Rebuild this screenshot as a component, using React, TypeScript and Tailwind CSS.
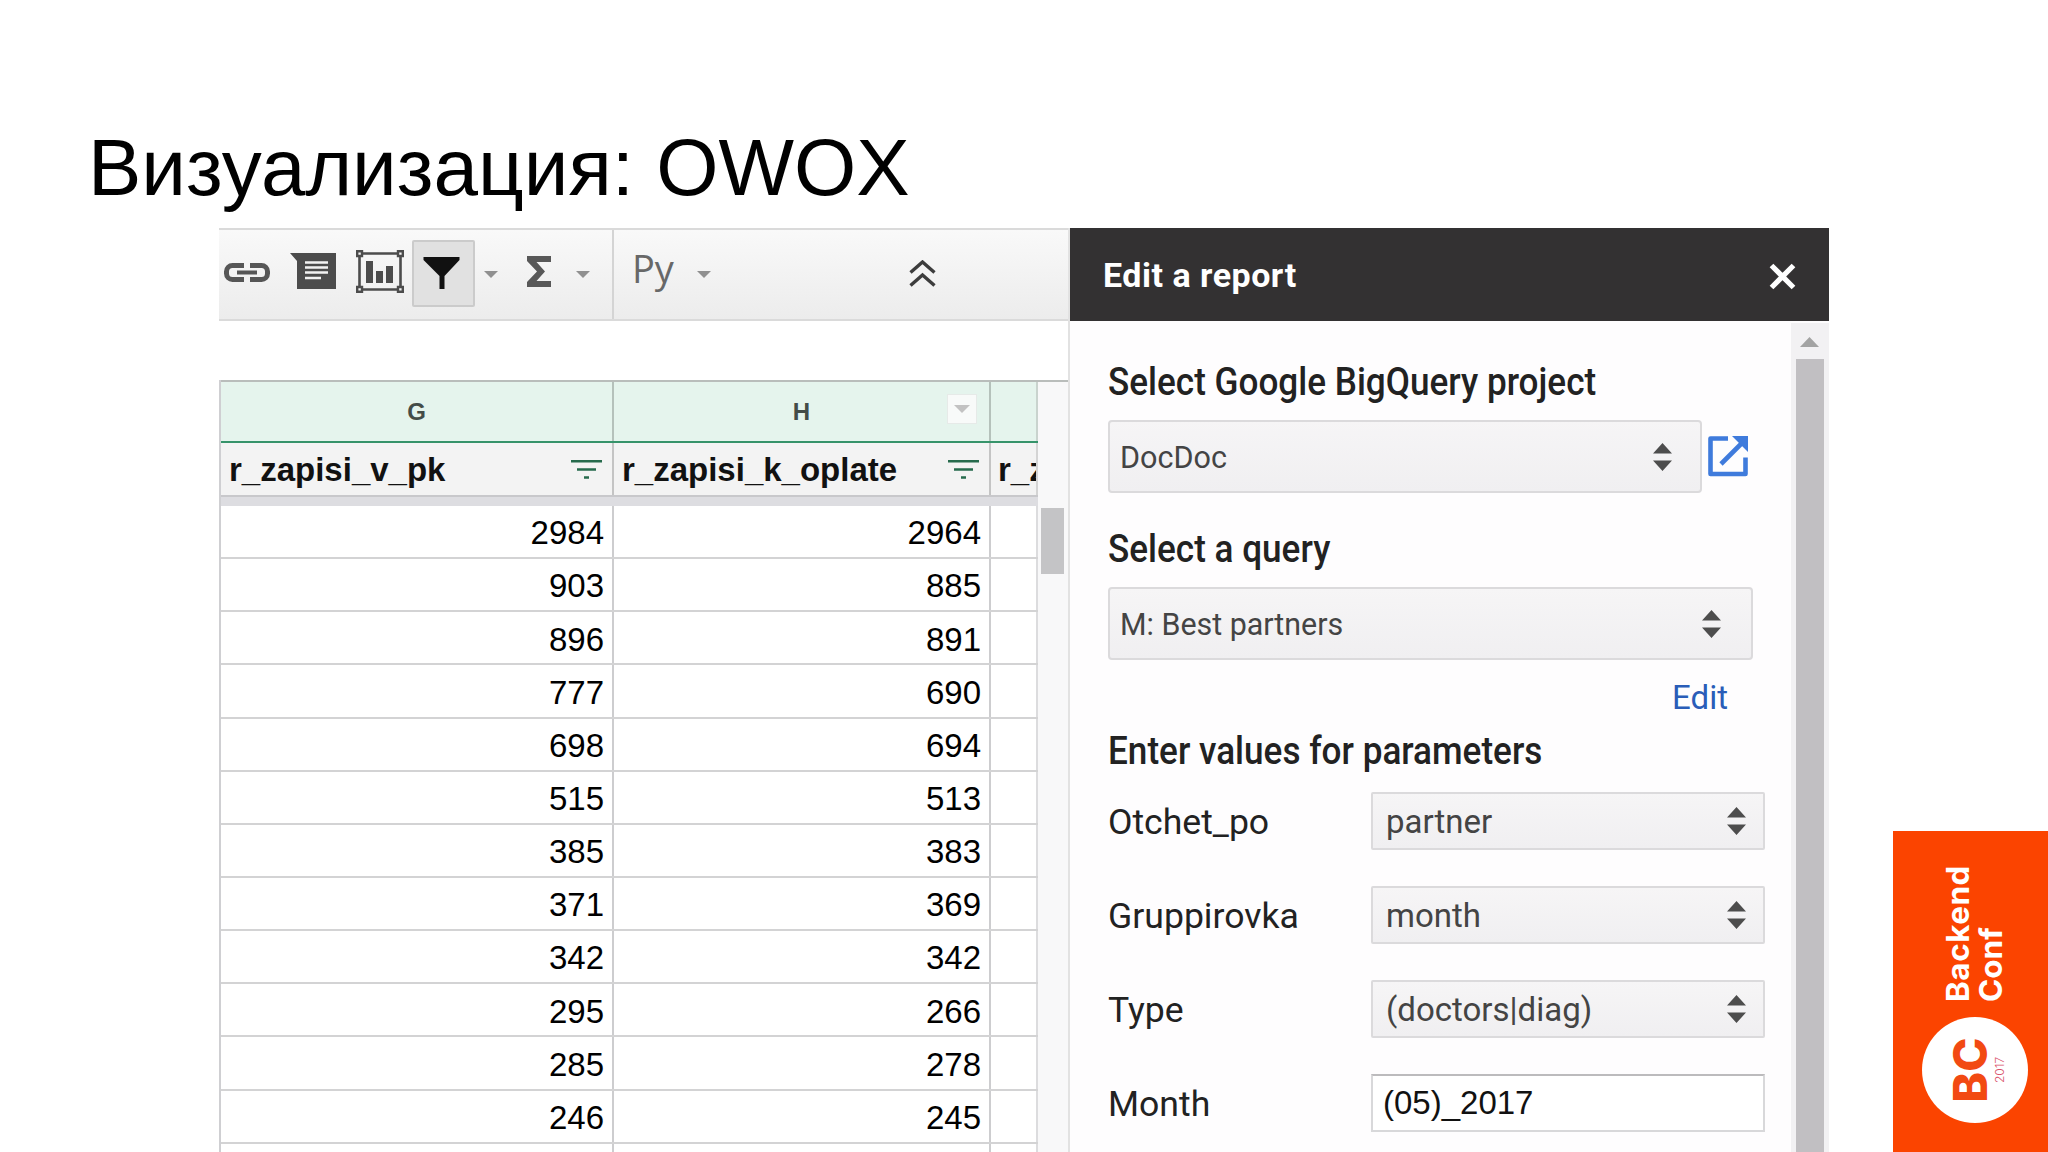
import React from "react";

const ROWS: [string, string][] = [
  ["2984", "2964"],
  ["903", "885"],
  ["896", "891"],
  ["777", "690"],
  ["698", "694"],
  ["515", "513"],
  ["385", "383"],
  ["371", "369"],
  ["342", "342"],
  ["295", "266"],
  ["285", "278"],
  ["246", "245"],
  ["", ""],
];

const PARAMS = [
  { label: "Otchet_po", value: "partner" },
  { label: "Gruppirovka", value: "month" },
  { label: "Type", value: "(doctors|diag)" },
];

function Caret({ className = "" }: { className?: string }) {
  return (
    <svg className={`h-[7px] w-[14px] shrink-0 ${className}`} viewBox="0 0 14 7">
      <path d="M0 0h14L7 7z" fill="#909090" />
    </svg>
  );
}

function Toolbar() {
  return (
    <div className="flex h-[93px] shrink-0 items-start border-y-2 border-[#dadada] bg-linear-to-b from-[#f9f9f9] to-[#ececec]">
      <div className="flex h-full w-[395px] shrink-0 items-start border-r-2 border-[#d4d4d4]">
        <svg className="mt-[33px] ml-[5px] h-[19px] w-[46px] shrink-0" viewBox="0 0 46 19" fill="none" stroke="#565656">
          <path d="M20 2.5H8.500A6 6 0 0 0 2.500 8.500v2A6 6 0 0 0 8.500 16.500H20M26 2.500h11.500a6 6 0 0 1 6 6v2a6 6 0 0 1-6 6H26" strokeWidth="5" />
          <path d="M13 9.500h20" strokeWidth="4" />
        </svg>
        <svg className="mt-[23px] ml-[20px] h-[36px] w-[46px] shrink-0" viewBox="0 0 46 36">
          <path d="M0 0h46v36H7V8z" fill="#4c4c4c" />
          <path d="M15 9.500h23M15 14.500h23M15 19.500h23M15 25h16" stroke="#f2f2f2" strokeWidth="2.600" />
        </svg>
        <svg className="mt-[20px] ml-[20px] h-[43px] w-[48px] shrink-0" viewBox="0 0 48 43">
          <path d="M3.500 3.500h41v36h-41z" fill="none" stroke="#4c4c4c" strokeWidth="2.600" />
          <path d="M10 11h7v22h-7zM20 21h7v12h-7zM30 16h7v17h-7z" fill="#4c4c4c" />
          <g fill="#f4f4f4" stroke="#4c4c4c" strokeWidth="2.400">
            <path d="M1.200 1.200h4.800v4.800h-4.800zM42 1.200h4.800v4.800H42zM1.200 37h4.800v4.800h-4.800zM42 37h4.800v4.800H42z" />
          </g>
        </svg>
        <div className="mt-[10px] ml-[8px] flex h-[67px] w-[63px] shrink-0 rounded-xs border-2 border-[#cbcbcb] bg-[#e1e1e1] pt-[15px] pl-[9px]">
          <svg className="h-[32px] w-[37px]" viewBox="0 0 36 32">
            <path d="M0 0h36v3L21 19v13h-5V19L0 3z" fill="#111" />
          </svg>
        </div>
        <Caret className="mt-[41px] ml-[9px]" />
        <svg className="mt-[26px] ml-[29px] h-[31px] w-[24px] shrink-0" viewBox="0 0 24 31">
          <path d="M0 0h24v6H9.500l8.500 9.500L9.500 25H24v6H0v-5l10-10.500L0 5z" fill="#585858" />
        </svg>
        <Caret className="mt-[41px] ml-[25px]" />
      </div>
      <div className="mt-[12px] ml-[18px] h-[52px] w-[46px] shrink-0 font-['Open_Sans'] text-[38px] leading-[52px] font-medium text-[#686868]">Py</div>
      <Caret className="mt-[41px] ml-[19px]" />
      <svg className="mt-[30px] ml-[198px] h-[27px] w-[27px] shrink-0" viewBox="0 0 27 27" fill="none" stroke="#3c3c3c" strokeWidth="3.400">
        <path d="M1.500 12.500l12-10.500 12 10.500M1.500 25.500l12-10.500 12 10.500" />
      </svg>
    </div>
  );
}

function FilterIcon() {
  return (
    <svg className="h-[19px] w-[31px] shrink-0" viewBox="0 0 31 19">
      <path d="M0 1.200h31M6 9.500h19M13 17.500h5" stroke="#276b4d" strokeWidth="2.400" />
    </svg>
  );
}

function Sheet() {
  return (
    <div className="flex h-full w-[851px] shrink-0 flex-col border-r-2 border-[#e2e2e2] font-['Liberation_Sans',sans-serif]">
      <Toolbar />
      <div className="flex min-h-0 flex-1 pt-[59px]">
        <div className="w-[819px] shrink-0 border-l-2 border-[#cfcfd2]">
          <div className="flex h-[61px] border-t-2 border-[#b9bdbb] bg-[#e5f4ed] text-[24px] font-bold text-[#444c48]">
            <div className="flex w-[393px] items-center justify-center border-r-2 border-[#b5c1bb]">G</div>
            <div className="relative flex w-[377px] items-center justify-center border-r-2 border-[#b5c1bb]">
              H
              <div className="absolute top-[12px] right-[12px] flex h-[30px] w-[30px] items-center justify-center border border-[#e6eae8] bg-[#f8faf9]">
                <svg className="h-[8px] w-[16px]" viewBox="0 0 16 8">
                  <path d="M0 0h16L8 8z" fill="#c2c2c2" />
                </svg>
              </div>
            </div>
            <div className="flex-1 border-r-2 border-[#c9d3ce]" />
          </div>
          <div className="flex h-[54px] border-t-2 border-[#36936a] bg-[#f3f3f3] text-[33px] font-bold text-[#111]">
            <div className="flex w-[393px] items-center justify-between border-r-2 border-[#c4c4c4] pr-[10px] pl-[8px]">
              <span className="pt-[2px]">r_zapisi_v_pk</span>
              <FilterIcon />
            </div>
            <div className="flex w-[377px] items-center justify-between border-r-2 border-[#c4c4c4] pr-[10px] pl-[8px]">
              <span className="pt-[2px]">r_zapisi_k_oplate</span>
              <FilterIcon />
            </div>
            <div className="flex flex-1 items-center overflow-hidden border-r-2 border-[#d4d4d4] pt-[2px] pl-[7px] whitespace-nowrap">r_z</div>
          </div>
          <div className="h-[11px] w-[847px] border-t-2 border-[#c8c8cb] bg-[#dddde1]" />
          <div className="h-[646px] overflow-hidden">
            {ROWS.map(([g, h], i) => (
              <div key={i} className="flex h-[53.15px] border-b-2 border-[#d3d3d4] bg-white text-[33px] text-black">
                <div className="flex w-[393px] items-center justify-end border-r-2 border-[#cdcdcf] pt-[3px] pr-[8px]">{g}</div>
                <div className="flex w-[377px] items-center justify-end border-r-2 border-[#cdcdcf] pt-[3px] pr-[8px]">{h}</div>
                <div className="flex-1 border-r-2 border-[#dcdcde]" />
              </div>
            ))}
          </div>
        </div>
        <div className="flex flex-1 flex-col bg-[#f8f8f9]">
          <div className="h-[115px] border-t-2 border-[#b9bdbb]" />
          <div className="mt-[13px] ml-[3px] h-[66px] w-[23px] bg-[#c4c4c6]" />
        </div>
      </div>
    </div>
  );
}

function Heading({ children, className = "" }: { children: React.ReactNode; className?: string }) {
  return (
    <div className={`h-[40px] origin-left scale-x-[0.924] text-[38px] leading-[40px] font-medium whitespace-nowrap text-[#222] ${className}`}>
      {children}
    </div>
  );
}

function SortArrows() {
  return (
    <svg className="h-[28px] w-[19px] shrink-0" viewBox="0 0 19 28">
      <path d="M9.500 0L19 10.500H0zM0 17.500h19L9.500 28z" fill="#4d4d4d" />
    </svg>
  );
}

function Panel() {
  return (
    <div className="flex h-full w-[759px] shrink-0 flex-col bg-[#fefdfe] font-['Roboto',sans-serif]">
      <div className="flex h-[93px] shrink-0 items-center justify-between bg-[#333132] pr-[33px] pl-[33px] text-white">
        <span className="text-[34px] leading-none font-bold tracking-[0.5px]">Edit a report</span>
        <svg className="mt-[3px] h-[27px] w-[27px]" viewBox="0 0 27 27">
          <path d="M2.500 2.500l22 22M24.500 2.500l-22 22" stroke="#fff" strokeWidth="5.200" />
        </svg>
      </div>
      <div className="flex min-h-0 flex-1">
        <div className="w-[721px] shrink-0 pl-[38px]">
          <Heading className="mt-[41px]">Select Google BigQuery project</Heading>
          <div className="mt-[18px] flex h-[73px] items-center">
            <div className="flex h-full w-[594px] items-center justify-between rounded-sm border-2 border-[#dbdadc] bg-linear-to-b from-[#f6f5f6] to-[#f0eff1] pr-[28px] pl-[10px] text-[32px] text-[#444]">
              <span className="origin-left scale-x-[0.955]">DocDoc</span>
              <SortArrows />
            </div>
            <svg className="ml-[6px] h-[41px] w-[40px] shrink-0" viewBox="0 0 40 41" fill="none" stroke="#3f7bdc">
              <path d="M20 2.500H2.500V38H37.500V21.500" strokeWidth="4.600" strokeLinejoin="round" />
              <path d="M13 28L34 7" strokeWidth="4.600" />
              <path d="M24 0h16v16z" fill="#3f7bdc" stroke="none" />
            </svg>
          </div>
          <Heading className="mt-[36px]">Select a query</Heading>
          <div className="mt-[18px] flex h-[73px] w-[645px] items-center justify-between rounded-sm border-2 border-[#dbdadc] bg-linear-to-b from-[#f6f5f6] to-[#f0eff1] pr-[30px] pl-[10px] text-[32px] text-[#444]">
            <span className="origin-left scale-x-[0.95]">M: Best partners</span>
            <SortArrows />
          </div>
          <div className="mt-[18px] h-[40px] w-[620px] text-right text-[33px] leading-[40px] text-[#2a5db8]">Edit</div>
          <Heading className="mt-[13px]">Enter values for parameters</Heading>
          <div className="mt-[21px] flex flex-col gap-[36px]">
            {PARAMS.map((p) => (
              <div key={p.label} className="flex h-[58px] items-center">
                <div className="w-[263px] shrink-0 pt-[4px] text-[35.6px] text-[#222]">{p.label}</div>
                <div className="flex h-full w-[394px] items-center justify-between rounded-xs border-2 border-[#dbdadc] bg-linear-to-b from-[#f6f5f6] to-[#f0eff1] pr-[17px] pl-[13px] text-[33px] text-[#444]">
                  <span className="pt-[1px]">{p.value}</span>
                  <SortArrows />
                </div>
              </div>
            ))}
            <div className="flex h-[58px] items-center">
              <div className="w-[263px] shrink-0 pt-[3px] text-[35.6px] text-[#222]">Month</div>
              <div className="flex h-full w-[394px] items-center border-2 border-[#d8d8da] border-t-[#bcbbbd] bg-white pb-[1px] pl-[10px] font-['Liberation_Sans',sans-serif] text-[33px] text-[#111]">
                (05)_2017
              </div>
            </div>
          </div>
        </div>
        <div className="mt-[2px] flex flex-1 flex-col bg-[#f2f1f3] pr-[5px] pl-[5px]">
          <svg className="mt-[14px] ml-[4px] h-[10px] w-[19px] shrink-0" viewBox="0 0 19 10">
            <path d="M9.500 0L19 10H0z" fill="#a3a3a3" />
          </svg>
          <div className="mt-[12px] flex-1 bg-[#c1bfc2]" />
        </div>
      </div>
    </div>
  );
}

function ConferenceBadge() {
  return (
    <div className="absolute right-0 bottom-0 h-[321px] w-[155px] bg-[#fb4400] font-['Inter',sans-serif]">
      <div className="absolute top-full left-0 flex h-[155px] w-[321px] origin-top-left -rotate-90 items-center pt-[8px] pl-[29px]">
        <div className="flex h-[106px] w-[106px] shrink-0 flex-col items-center rounded-full bg-white pt-[25px] text-[#f24a12]">
          <div className="text-[46px] leading-none font-extrabold">BC</div>
          <div className="mt-[1px] text-[12px] leading-none font-light text-[#d9506a]">2017</div>
        </div>
        <div className="ml-[15px] flex flex-col text-[31.5px] leading-[32.5px] font-bold text-white">
          <span className="tracking-[0.5px]">Backend</span>
          <span>Conf</span>
        </div>
      </div>
    </div>
  );
}

export default function App() {
  return (
    <main className="relative flex h-[1152px] w-[2048px] flex-col overflow-hidden bg-white">
      <h1 className="h-[228px] shrink-0 pt-[128px] pl-[88px] font-['Liberation_Sans',sans-serif] text-[80px] leading-[80px] text-black">
        Визуализация: OWOX
      </h1>
      <div className="ml-[219px] flex h-[924px] w-[1610px]">
        <Sheet />
        <Panel />
      </div>
      <ConferenceBadge />
    </main>
  );
}
